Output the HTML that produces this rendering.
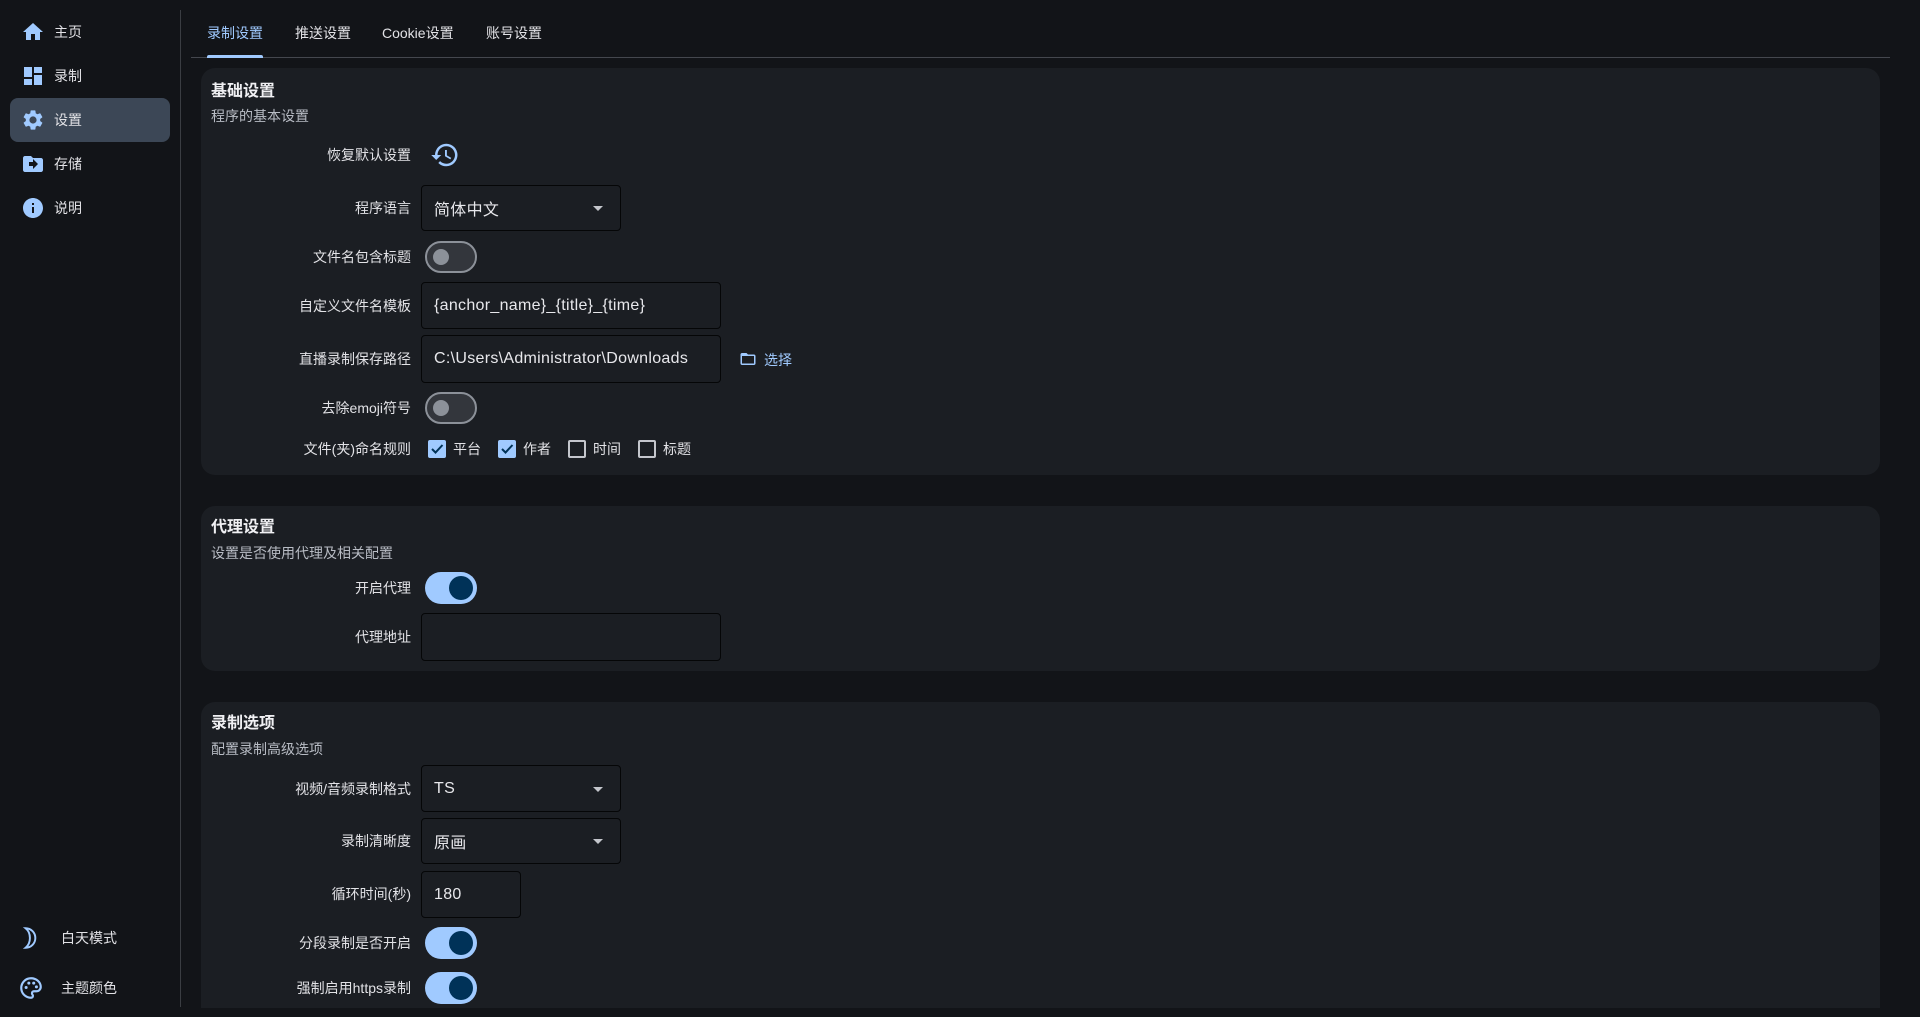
<!DOCTYPE html>
<html><head><meta charset="utf-8">
<style>
*{box-sizing:border-box;margin:0;padding:0}
body{width:1920px;height:1017px;background:#121418;font-family:"Liberation Sans","Noto Sans CJK SC",sans-serif;color:#e2e2e6;position:relative;overflow:hidden}
.abs{position:absolute}
.nav{position:absolute;left:10px;width:160px;height:44px;border-radius:8px;display:flex;align-items:center;font-size:14px;color:#e2e2e6}
.nav svg{position:absolute;left:11px;width:24px;height:24px}
.nav span{position:absolute;left:44px}
.sel{background:#3c4756}
.vline{left:180px;top:10px;width:1px;height:997px;background:#3a3d42}
.tab{top:24px;font-size:14px;color:#e2e2e6;line-height:18px}
.card{background:#1b1e23;border-radius:14px;left:201px;width:1679px}
.title{font-size:16px;font-weight:bold;color:#f0f0f3}
.sub{font-size:14px;color:#b8bcc4}
.lbl{font-size:14px;right:1509px;text-align:right;white-space:nowrap;line-height:18px;color:#e2e2e6}
.inp{left:421px;border:1px solid #050607;border-radius:4px;font-size:16px;display:flex;align-items:center;padding-left:12px;overflow:hidden;white-space:nowrap;color:#e8e8ec;letter-spacing:0.3px}
.dd::after{content:"";position:absolute;right:17px;top:50%;margin-top:-2px;border-left:5px solid transparent;border-right:5px solid transparent;border-top:5px solid #c4c6cc}
.sw{left:425px;width:52px;height:32px;border-radius:16px}
.off{border:2px solid #8c9199;background:#33363c}
.off::after{content:"";position:absolute;left:6px;top:6px;width:16px;height:16px;border-radius:50%;background:#8c9199}
.on{background:#a0caff}
.on::after{content:"";position:absolute;left:24px;top:4px;width:24px;height:24px;border-radius:50%;background:#003258}
.cb{width:18px;height:18px;border-radius:2px}
.cbon{background:#a0caff}
.cboff{border:2px solid #c4c6cc}
.cl{font-size:14px;line-height:18px}
</style></head><body>

<div class="nav" style="top:10px">
<svg viewBox="0 0 24 24"><path fill="#a0caff" d="M10 20v-6h4v6h5v-8h3L12 3 2 12h3v8z"/></svg><span>主页</span></div>
<div class="nav" style="top:54px">
<svg viewBox="0 0 24 24"><path fill="#a0caff" d="M3 13h8V3H3v10zm0 8h8v-6H3v6zm10 0h8V11h-8v10zm0-18v6h8V3h-8z"/></svg><span>录制</span></div>
<div class="nav sel" style="top:98px">
<svg viewBox="0 0 24 24"><path fill="#a0caff" d="M19.14 12.94c.04-.3.06-.61.06-.94 0-.32-.02-.64-.07-.94l2.03-1.580a.49.49 0 0 0 .12-.61l-1.92-3.32a.49.49 0 0 0-.59-.22l-2.39.96c-.5-.38-1.03-.7-1.62-.94l-.36-2.54a.484.484 0 0 0-.48-.41h-3.840c-.24 0-.43.17-.47.41l-.36 2.54c-.59.24-1.13.57-1.62.94l-2.39-.96a.49.49 0 0 0-.59.22L2.74 8.87c-.12.21-.08.47.12.61l2.03 1.58c-.05.3-.09.63-.09.94s.02.64.07.94l-2.03 1.58a.49.49 0 0 0-.12.61l1.92 3.32c.12.22.37.29.59.22l2.39-.96c.5.38 1.03.7 1.62.94l.36 2.54c.05.24.24.41.48.41h3.84c.24 0 .44-.17.47-.41l.36-2.54c.59-.24 1.13-.56 1.62-.94l2.39.96c.22.08.47 0 .59-.22l1.92-3.32c.12-.22.07-.47-.12-.61l-2.01-1.58zM12 15.6A3.6 3.6 0 1 1 12 8.4a3.6 3.6 0 0 1 0 7.2z"/></svg><span>设置</span></div>
<div class="nav" style="top:142px">
<svg viewBox="0 0 24 24"><path fill="#a0caff" d="M20 6h-8l-2-2H4c-1.1 0-2 .9-2 2v12c0 1.1.9 2 2 2h16c1.1 0 2-.9 2-2V8c0-1.1-.9-2-2-2zm-8 11v-3H8v-4h4V7l5 5-5 5z"/></svg><span>存储</span></div>
<div class="nav" style="top:186px">
<svg viewBox="0 0 24 24"><path fill="#a0caff" d="M12 2C6.48 2 2 6.48 2 12s4.48 10 10 10 10-4.48 10-10S17.52 2 12 2zm1 15h-2v-6h2v6zm0-8h-2V7h2v2z"/></svg><span>说明</span></div>

<svg class="abs" style="left:18px;top:925px" width="26" height="26" viewBox="0 0 24 24"><path fill="none" stroke="#a0caff" stroke-width="1.8" d="M7 3c5 0 9 4 9 9s-4 9-9 9c2.5-2 4-5.3 4-9s-1.5-7-4-9z"/></svg>
<div class="abs" style="left:61px;top:928px;font-size:14px">白天模式</div>
<svg class="abs" style="left:18px;top:975px" width="26" height="26" viewBox="0 0 24 24"><path fill="none" stroke="#a0caff" stroke-width="2" d="M12 3a9 9 0 0 0 0 18c1.2 0 1.8-.8 1.8-1.7 0-.5-.3-.9-.5-1.3-.3-.4-.4-.8-.4-1.2 0-1 .8-1.8 1.8-1.8H17a4 4 0 0 0 4-4c0-4.4-4-8-9-8z"/><circle cx="7.5" cy="11.5" r="1.4" fill="#a0caff"/><circle cx="10" cy="7.5" r="1.4" fill="#a0caff"/><circle cx="14.5" cy="7.5" r="1.4" fill="#a0caff"/><circle cx="17" cy="11" r="1.4" fill="#a0caff"/></svg>
<div class="abs" style="left:61px;top:978px;font-size:14px">主题颜色</div>

<div class="abs vline"></div>

<div class="abs tab" style="left:207px;color:#a0caff">录制设置</div>
<div class="abs tab" style="left:295px">推送设置</div>
<div class="abs tab" style="left:382px">Cookie设置</div>
<div class="abs tab" style="left:486px">账号设置</div>
<div class="abs" style="left:191px;top:57px;width:1699px;height:1px;background:#44474e"></div>
<div class="abs" style="left:207px;top:55px;width:56px;height:3px;background:#a0caff;border-radius:2px 2px 0 0"></div>

<!-- card 1 -->
<div class="abs card" style="top:68px;height:407px"></div>
<div class="abs title" style="left:211px;top:77px">基础设置</div>
<div class="abs sub" style="left:211px;top:106px">程序的基本设置</div>

<div class="abs lbl" style="top:146px">恢复默认设置</div>
<svg class="abs" style="left:429px;top:140px" width="32" height="30" viewBox="0 0 24 24"><path fill="#a0caff" d="M13 3a9 9 0 0 0-9 9H1l3.89 3.89.07.14L9 12H6c0-3.870 3.13-7 7-7s7 3.13 7 7-3.13 7-7 7c-1.93 0-3.68-.79-4.94-2.06l-1.42 1.42A8.954 8.954 0 0 0 13 21a9 9 0 0 0 0-18zm-1 5v5l4.28 2.54.72-1.21-3.5-2.08V8H12z"/></svg>

<div class="abs lbl" style="top:199px">程序语言</div>
<div class="abs inp dd" style="top:185px;width:200px;height:46px">简体中文</div>

<div class="abs lbl" style="top:248px">文件名包含标题</div>
<div class="abs sw off" style="top:241px"></div>

<div class="abs lbl" style="top:297px">自定义文件名模板</div>
<div class="abs inp" style="top:282px;width:300px;height:47px">{anchor_name}_{title}_{time}</div>

<div class="abs lbl" style="top:350px">直播录制保存路径</div>
<div class="abs inp" style="top:335px;width:300px;height:48px"><span style="display:block;width:276px;overflow:hidden">C:\Users\Administrator\Downloads</span></div>
<svg class="abs" style="left:739px;top:350px" width="18" height="18" viewBox="0 0 24 24"><path fill="#a0caff" d="M20 6h-8l-2-2H4c-1.1 0-2 .9-2 2v12c0 1.1.9 2 2 2h16c1.1 0 2-.9 2-2V8c0-1.1-.9-2-2-2zm0 12H4V8h16v10z"/></svg>
<div class="abs" style="left:764px;top:350px;font-size:14px;color:#a0caff">选择</div>

<div class="abs lbl" style="top:399px">去除emoji符号</div>
<div class="abs sw off" style="top:392px"></div>

<div class="abs lbl" style="top:440px">文件(夹)命名规则</div>
<div class="abs cb cbon" style="left:428px;top:440px"><svg width="18" height="18" viewBox="0 0 18 18"><path d="M4 9l3.5 3.5L14.5 5" fill="none" stroke="#003258" stroke-width="2"/></svg></div>
<div class="abs cl" style="left:453px;top:440px">平台</div>
<div class="abs cb cbon" style="left:498px;top:440px"><svg width="18" height="18" viewBox="0 0 18 18"><path d="M4 9l3.5 3.5L14.5 5" fill="none" stroke="#003258" stroke-width="2"/></svg></div>
<div class="abs cl" style="left:523px;top:440px">作者</div>
<div class="abs cb cboff" style="left:568px;top:440px"></div>
<div class="abs cl" style="left:593px;top:440px">时间</div>
<div class="abs cb cboff" style="left:638px;top:440px"></div>
<div class="abs cl" style="left:663px;top:440px">标题</div>

<!-- card 2 -->
<div class="abs card" style="top:506px;height:165px"></div>
<div class="abs title" style="left:211px;top:513px">代理设置</div>
<div class="abs sub" style="left:211px;top:543px">设置是否使用代理及相关配置</div>
<div class="abs lbl" style="top:579px">开启代理</div>
<div class="abs sw on" style="top:572px"></div>
<div class="abs lbl" style="top:628px">代理地址</div>
<div class="abs inp" style="top:613px;width:300px;height:48px"></div>

<!-- card 3 -->
<div class="abs card" style="top:702px;height:306px;border-radius:14px 14px 0 0"></div>
<div class="abs title" style="left:211px;top:709px">录制选项</div>
<div class="abs sub" style="left:211px;top:739px">配置录制高级选项</div>
<div class="abs lbl" style="top:780px">视频/音频录制格式</div>
<div class="abs inp dd" style="top:765px;width:200px;height:47px">TS</div>
<div class="abs lbl" style="top:832px">录制清晰度</div>
<div class="abs inp dd" style="top:818px;width:200px;height:46px">原画</div>
<div class="abs lbl" style="top:885px">循环时间(秒)</div>
<div class="abs inp" style="top:871px;width:100px;height:47px">180</div>
<div class="abs lbl" style="top:934px">分段录制是否开启</div>
<div class="abs sw on" style="top:927px"></div>
<div class="abs lbl" style="top:979px">强制启用https录制</div>
<div class="abs sw on" style="top:972px"></div>
<div class="abs" style="left:181px;top:1008px;width:1739px;height:9px;background:#121418"></div>
</body></html>
